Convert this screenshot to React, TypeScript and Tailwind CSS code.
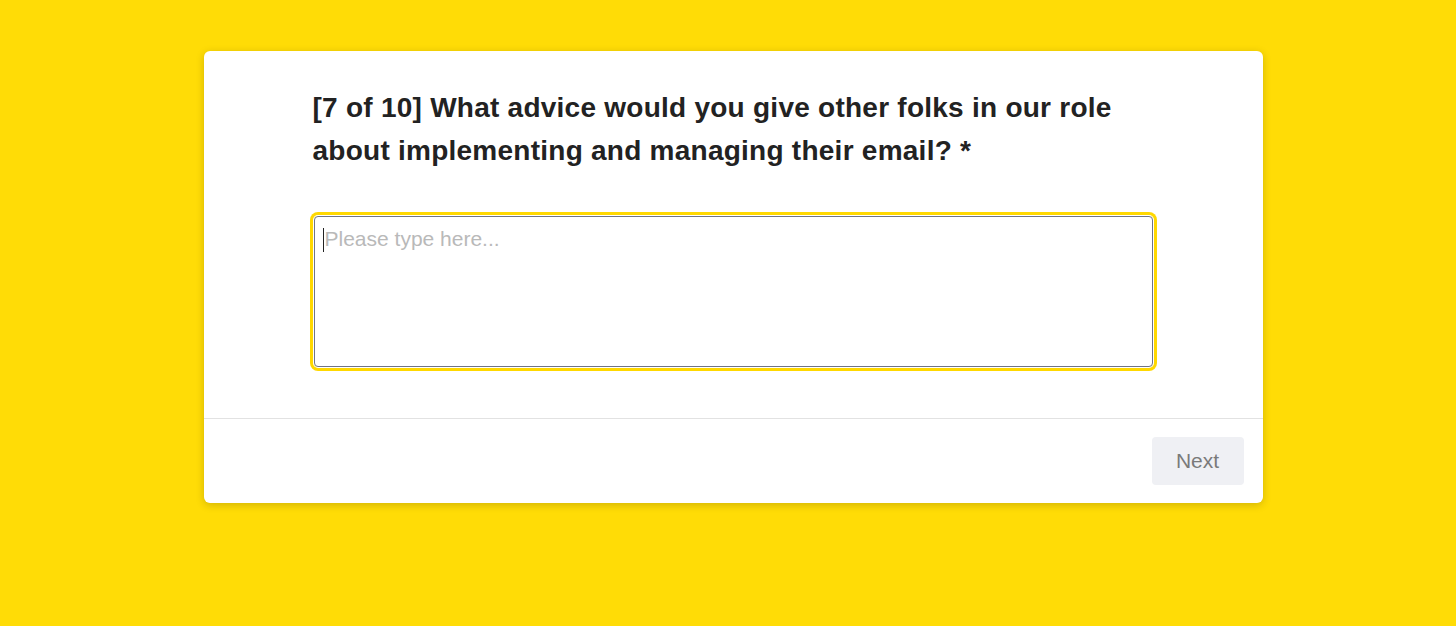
import React from "react";

export default function App() {
  return (
    <div
      className="min-h-[626px] w-full bg-[#ffdc06] flex justify-center pt-[51px] pl-[10px]"
      style={{ fontFamily: '"Liberation Sans", Arial, sans-serif' }}
    >
      <div className="w-[1059px] h-[452px] bg-white rounded-[6px] shadow-[0_2px_8px_rgba(0,0,0,0.18)] flex flex-col">
        <div className="flex-1 flex justify-center pt-[35px]">
          <div className="w-[841px]">
            <h1 className="text-[28px] leading-[43px] font-bold text-[#222] tracking-[0.25px]">
              [7 of 10] What advice would you give other folks in our role about implementing and managing their email? *
            </h1>
            <div className="relative mt-[44px] mx-[1px] h-[151px] rounded-[4px] border border-[#6f7487] shadow-[0_0_0_1px_#ffffff,0_0_0_4px_#ffd800]">
              <textarea
                className="w-full h-full resize-none outline-none bg-transparent pl-[10px] pt-[10px] text-[21px] leading-[24px] text-[#333] placeholder:text-[#b9b9b9]"
                placeholder="Please type here..."
                style={{ fontFamily: '"Liberation Sans", Arial, sans-serif' }}
              />
              <span className="absolute left-[8px] top-[11px] w-[1px] h-[24px] bg-[#222]" />
            </div>
          </div>
        </div>
        <div className="border-t border-[#e2e2e2] h-[85px] flex items-start justify-end pt-[18px] pr-[19px]">
          <button className="w-[92px] h-[48px] rounded-[4px] bg-[#eff0f4] text-[21px] text-[#7a7a7a]">
            Next
          </button>
        </div>
      </div>
    </div>
  );
}
